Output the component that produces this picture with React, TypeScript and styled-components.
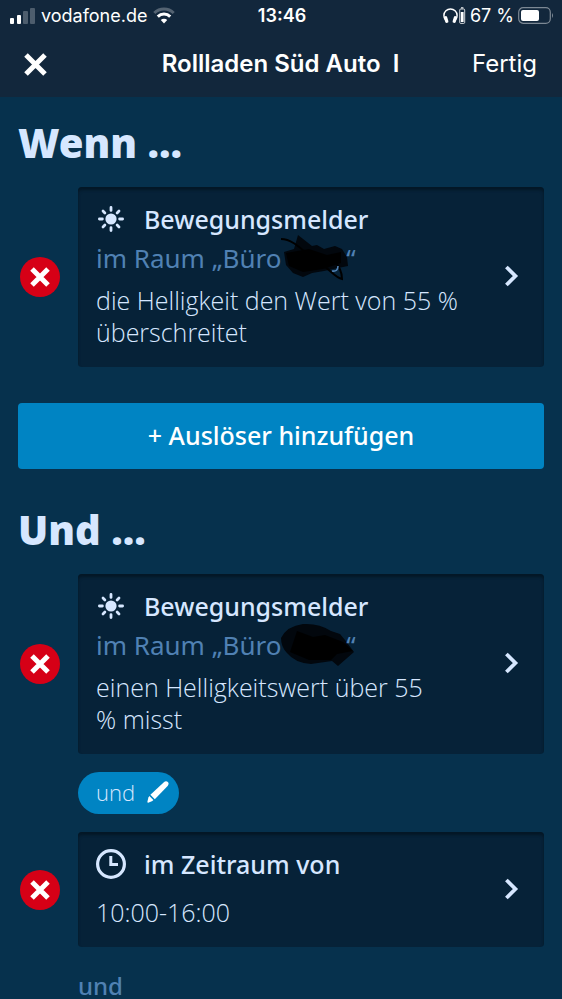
import React from 'react';
import styled, { createGlobalStyle } from 'styled-components';

const color = {
  page: '#06314d',
  bar: '#12273c',
  card: '#062238',
  cardEdge: '#041726',
  text: '#d6e7ff',
  muted: '#5081b3',
  accent: '#0084c3',
  danger: '#d60016',
  white: '#ffffff',
};

const GlobalStyle = createGlobalStyle`
  *, *::before, *::after { box-sizing: border-box; }
  html { background: ${color.page}; overflow: hidden auto; scrollbar-width: none; }
  body {
    margin: 0;
    background: ${color.page};
    color: ${color.text};
    font-family: 'Noto Sans', 'Open Sans', sans-serif;
  }
  button { font: inherit; color: inherit; border: 0; padding: 0; background: none; cursor: pointer; }
  svg { display: block; flex: none; }
`;

const TopBar = styled.header`
  background: ${color.bar};
  color: ${color.white};
  font-family: Inter, sans-serif;
`;

const StatusBar = styled.div`
  display: grid;
  grid-template-columns: 1fr auto 1fr;
  align-items: center;
  height: 31px;
  padding: 0 8px 0 10px;
  font-size: 18px;
  line-height: 31px;
`;

const StatusGroup = styled.div<{ $end?: boolean }>`
  display: flex;
  align-items: center;
  gap: ${(p) => (p.$end ? 4 : 6)}px;
  justify-content: ${(p) => (p.$end ? 'flex-end' : 'flex-start')};
  white-space: nowrap;
`;

const Clock = styled.time`
  font-weight: 600;
`;

const NavBar = styled.nav`
  display: grid;
  grid-template-columns: 1fr auto 1fr;
  align-items: center;
  height: 66px;
  padding: 0 25px 0 24px;
`;

const Title = styled.h1`
  margin: 0;
  font-size: 24px;
  font-weight: 600;
  line-height: 32px;
  white-space: pre;
`;

const CloseButton = styled.button`
  justify-self: start;
`;

const DoneButton = styled.button`
  justify-self: end;
  && { font-size: 24px; }
  line-height: 32px;
`;

const Content = styled.main`
  padding: 18px 18px 0;
`;

const Heading = styled.h2`
  margin: 0 0 16px;
  font-size: 40px;
  font-weight: 900;
  line-height: 56px;
`;

const Row = styled.div`
  display: grid;
  grid-template-columns: 40px 1fr;
  align-items: center;
  column-gap: 18px;
  padding-left: 2px;
`;

const DeleteButton = styled.button`
  display: grid;
  place-items: center;
  width: 40px;
  height: 40px;
  border-radius: 50%;
  && { background: ${color.danger}; }
`;

const Card = styled.button`
  display: flex;
  align-items: center;
  justify-content: space-between;
  width: 100%;
  && {
    padding: 15px 25px 17px 18px;
    background: ${color.card};
    text-align: left;
  }
  border-radius: 4px;
  box-shadow: inset 0 3px 3px ${color.cardEdge};
`;

const CardBody = styled.span`
  display: flex;
  flex-direction: column;
  gap: 6px;
`;

const CardTitle = styled.span`
  display: flex;
  align-items: center;
  gap: 18px;
  font-size: 25px;
  font-weight: 500;
  line-height: 34px;
`;

const Place = styled.span`
  display: flex;
  align-items: center;
  color: ${color.muted};
  font-size: 26px;
  line-height: 32px;
  white-space: pre;

  svg {
    width: 66px;
    margin: -7px -1px -7px -7px;
  }
`;

const Detail = styled.span<{ $afterTitle: boolean }>`
  padding: ${(p) => (p.$afterTitle ? 9 : 4)}px 0 2px;
  font-family: 'Open Sans', 'Noto Sans', sans-serif;
  font-size: 25px;
  font-weight: 300;
  line-height: 32px;
`;

const AddButton = styled.button`
  display: block;
  width: 100%;
  margin: 36px 0 33px;
  border-radius: 4px;
  && {
    padding: 15px 16px 17px;
    background: ${color.accent};
    color: ${color.white};
    font-size: 25px;
    font-weight: 500;
  }
  line-height: 34px;
`;

const Connector = styled.div`
  padding: 18px 0 18px 60px;
`;

const Pill = styled.button`
  display: flex;
  align-items: center;
  gap: 12px;
  border-radius: 21px;
  && {
    padding: 4px 10px 6px 18px;
    background: ${color.accent};
    font-family: 'Open Sans', 'Noto Sans', sans-serif;
    font-size: 22px;
    font-weight: 300;
    line-height: 32px;
  }
`;

const PlainConnector = styled.p`
  margin: 0;
  padding: 27px 0 0 60px;
  color: ${color.muted};
  font-size: 24px;
  font-weight: 500;
  line-height: 24px;
`;

const SignalIcon = () => (
  <svg width="25" height="16" viewBox="0 0 25 16" fill="#fff" aria-hidden="true">
    <rect x="0" y="10" width="4" height="6" rx="1" />
    <rect x="7" y="7" width="4" height="9" rx="1" />
    <rect x="13" y="3" width="5" height="13" rx="1" opacity=".25" />
    <rect x="20" y="0" width="5" height="16" rx="1" opacity=".25" />
  </svg>
);

const WifiIcon = () => (
  <svg width="22" height="17" viewBox="0 0 22 17" aria-hidden="true">
    <path d="M1.3 6 A13.7 13.7 0 0 1 20.7 6" fill="none" stroke="#fff" strokeWidth="3" opacity=".28" />
    <path d="M4.8 9.6 A8.8 8.8 0 0 1 17.2 9.6" fill="none" stroke="#fff" strokeWidth="3" />
    <path d="M7.8 13 A4.6 4.6 0 0 1 14.2 13 L11 16.4 Z" fill="#fff" />
  </svg>
);

const HeadphonesIcon = () => (
  <svg width="23" height="17" viewBox="0 0 23 17" aria-hidden="true">
    <path d="M2.6 13 A6.6 6.6 0 1 1 12.4 13" fill="none" stroke="#fff" strokeWidth="1.5" />
    <rect x="1.6" y="9" width="3.2" height="7" rx="1.5" fill="#fff" transform="rotate(-18 3.2 12.5)" />
    <rect x="10.2" y="9" width="3.2" height="7" rx="1.5" fill="#fff" transform="rotate(18 11.8 12.5)" />
    <rect x="16.7" y="2" width="5" height="14.4" rx="1" fill="none" stroke="#fff" strokeWidth="1" opacity=".8" />
    <rect x="17.8" y="5" width="2.8" height="10" fill="#fff" />
    <rect x="18" y="0" width="2.4" height="1.6" fill="#fff" opacity=".7" />
  </svg>
);

const BatteryIcon = () => (
  <svg width="36" height="17" viewBox="0 0 36 17" aria-hidden="true">
    <rect x=".7" y=".7" width="31.6" height="15.6" rx="4.5" fill="none" stroke="#fff" strokeWidth="1.2" opacity=".45" />
    <rect x="3" y="3" width="18" height="11" rx="2" fill="#fff" />
    <path d="M34 6 Q36 8.5 34 11 Z" fill="#fff" opacity=".45" />
  </svg>
);

const CrossIcon = ({ size, stroke }: { size: number; stroke: number }) => (
  <svg width={size} height={size} viewBox={`0 0 ${size} ${size}`} aria-hidden="true">
    <path
      d={`M2 2 L${size - 2} ${size - 2} M${size - 2} 2 L2 ${size - 2}`}
      stroke="#fff"
      strokeWidth={stroke}
    />
  </svg>
);

const SunIcon = () => (
  <svg width="30" height="30" viewBox="0 0 30 30" aria-hidden="true">
    <circle cx="15" cy="15" r="5.6" fill={color.text} />
    <g stroke={color.text} strokeWidth="2.8" strokeLinecap="round">
      <path d="M15 3.4v3M15 23.6v3M3.4 15h3M23.6 15h3" />
      <path d="M7 7l1.9 1.9M21.1 21.1L23 23M23 7l-1.9 1.9M8.9 21.1L7 23" />
    </g>
  </svg>
);

const ClockIcon = () => (
  <svg width="30" height="30" viewBox="0 0 30 30" fill="none" stroke={color.text} aria-hidden="true">
    <circle cx="15" cy="15" r="13.4" strokeWidth="3.2" />
    <path d="M14.8 7v8.6H22" strokeWidth="3" />
  </svg>
);

const ChevronIcon = () => (
  <svg width="16" height="22" viewBox="0 0 16 22" aria-hidden="true">
    <path d="M3.4 2 L12.4 11 L3.4 20" fill="none" stroke={color.text} strokeWidth="3.8" />
  </svg>
);

const PencilIcon = () => (
  <svg width="22" height="22" viewBox="0 0 22 22" fill="#fff" aria-hidden="true">
    <path d="M16.6 1.4 Q19 -.6 20.8 1 Q22.4 2.8 20.6 5 L7.8 18.2 L3.4 13.8 Z" />
    <path d="M2.4 15 L6.4 19 L5.4 20 L1.2 21.8 Q.2 21.8 .4 20.8 L1.4 16.4 Z" />
  </svg>
);

const InkScribble = () => (
  <svg width="66" height="46" viewBox="0 0 66 46" overflow="visible" aria-hidden="true">
    <path d="M3 17 L13 14 L17 0 L31 11 L36 10 L43 14 L54 11 L61 14 L66 22 L67 31 L57 33 L43 36 L31 38 L22 42 L12 38 L5 30 Z" fill="#02070d" />
    <path d="M5 18 L28 14 L46 20 L60 17 L60 28 L42 34 L22 37 L8 31 Z" fill="#000" />
    <path d="M0 4 C14 4 25 20 37 27 C47 32 54 43 61 44 C61 37 58 31 53 26" fill="none" stroke="#000" strokeWidth="2" />
    <path d="M51 36 Q57 37 57 31" fill="none" stroke={color.muted} strokeWidth="1.6" />
  </svg>
);

const InkBlot = () => (
  <svg width="66" height="46" viewBox="0 0 66 46" overflow="visible" aria-hidden="true">
    <path d="M0 16 Q6 4 22 2 Q38 1 50 9 L59 12 L64 18 L73 30 L57 44 L51 39 L30 42 Q14 41 6 31 Q0 25 0 16 Z" fill="#02070d" />
    <path d="M16 9 L32 15 L44 13 L62 20 L72 29 L56 32 L50 38 L28 38 L9 30 Z" fill="#000" />
  </svg>
);

type RuleProps = {
  icon: React.ReactNode;
  title: string;
  ink?: React.ReactNode;
  detail: string;
};

const Rule = ({ icon, title, ink, detail }: RuleProps) => (
  <Row>
    <DeleteButton type="button" aria-label={`${title} entfernen`}>
      <CrossIcon size={20} stroke={5} />
    </DeleteButton>
    <Card type="button">
      <CardBody>
        <CardTitle>
          {icon}
          {title}
        </CardTitle>
        {ink && (
          <Place>
            {'im Raum „Büro '}
            {ink}“
          </Place>
        )}
        <Detail $afterTitle={!ink}>{detail}</Detail>
      </CardBody>
      <ChevronIcon />
    </Card>
  </Row>
);

export default function App() {
  return (
    <>
      <GlobalStyle />
      <TopBar>
        <StatusBar>
          <StatusGroup>
            <SignalIcon />
            vodafone.de
            <WifiIcon />
          </StatusGroup>
          <Clock>13:46</Clock>
          <StatusGroup $end>
            <HeadphonesIcon />
            67 %
            <BatteryIcon />
          </StatusGroup>
        </StatusBar>
        <NavBar>
          <CloseButton type="button" aria-label="Schließen">
            <CrossIcon size={23} stroke={5} />
          </CloseButton>
          <Title>{'Rollladen Süd Auto  I'}</Title>
          <DoneButton type="button">Fertig</DoneButton>
        </NavBar>
      </TopBar>
      <Content>
        <Heading>Wenn ...</Heading>
        <Rule
          icon={<SunIcon />}
          title="Bewegungsmelder"
          ink={<InkScribble />}
          detail="die Helligkeit den Wert von 55 % überschreitet"
        />
        <AddButton type="button">+ Auslöser hinzufügen</AddButton>
        <Heading>Und ...</Heading>
        <Rule
          icon={<SunIcon />}
          title="Bewegungsmelder"
          ink={<InkBlot />}
          detail={'einen Helligkeitswert über 55 %\u00a0misst'}
        />
        <Connector>
          <Pill type="button">
            und
            <PencilIcon />
          </Pill>
        </Connector>
        <Rule icon={<ClockIcon />} title="im Zeitraum von" detail="10:00-16:00" />
        <PlainConnector>und</PlainConnector>
      </Content>
    </>
  );
}
